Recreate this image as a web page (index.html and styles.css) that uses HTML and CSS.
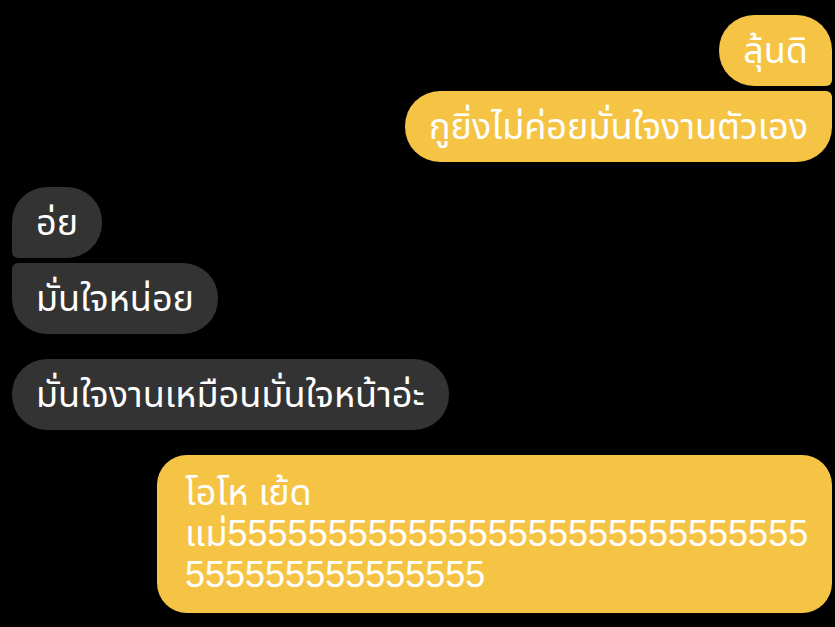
FILE: index.html
```
<!DOCTYPE html>
<html>
<head lang="th">
  <meta charset="UTF-8">
  <title>แชท</title>
  <link rel="stylesheet" href="styles.css">
</head>
<body>
  <div class="chat">
    <div class="group me">
      <div class="bubble first">ลุ้นดิ</div>
      <div class="bubble last">กูยิ่งไม่ค่อยมั่นใจงานตัวเอง</div>
    </div>
    <div class="group them">
      <div class="bubble first">อ่ย</div>
      <div class="bubble last">มั่นใจหน่อย</div>
    </div>
    <div class="group them">
      <div class="bubble">มั่นใจงานเหมือนมั่นใจหน้าอ่ะ</div>
    </div>
    <div class="group me">
      <div class="bubble long">โอโห เย้ด<br>แม่55555555555555555555555555555<br>555555555555555</div>
    </div>
  </div>
</body>
</html>
```

FILE: styles.css
```
* {
  margin: 0;
  padding: 0;
}
body {
  background: #000;
  font-family: "Noto Sans", "Noto Sans Thai", "DejaVu Sans", sans-serif;
}
.chat {
  display: flex;
  flex-direction: column;
  gap: 25px;
  padding: 15px 3px 0 12px;
}
.group {
  display: flex;
  flex-direction: column;
  gap: 5px;
}
.group.me {
  align-items: flex-end;
}
.group.them {
  align-items: flex-start;
}
.bubble {
  color: #fff;
  font-size: 36px;
  line-height: 42px;
  padding: 14px 24px 15px;
  border-radius: 35px;
}
.me .bubble {
  background: #f5c444;
}
.them .bubble {
  background: #333333;
}
.me .bubble.first {
  border-bottom-right-radius: 6px;
}
.me .bubble.last {
  border-top-right-radius: 6px;
}
.them .bubble.first {
  border-bottom-left-radius: 6px;
}
.them .bubble.last {
  border-top-left-radius: 6px;
}
.bubble.long {
  width: 675px;
  box-sizing: border-box;
  padding: 17px 28px 18px;
  border-radius: 30px;
  font-family: "Liberation Sans", "Noto Sans Thai", sans-serif;
  font-size: 36px;
  line-height: 41px;
}
```
